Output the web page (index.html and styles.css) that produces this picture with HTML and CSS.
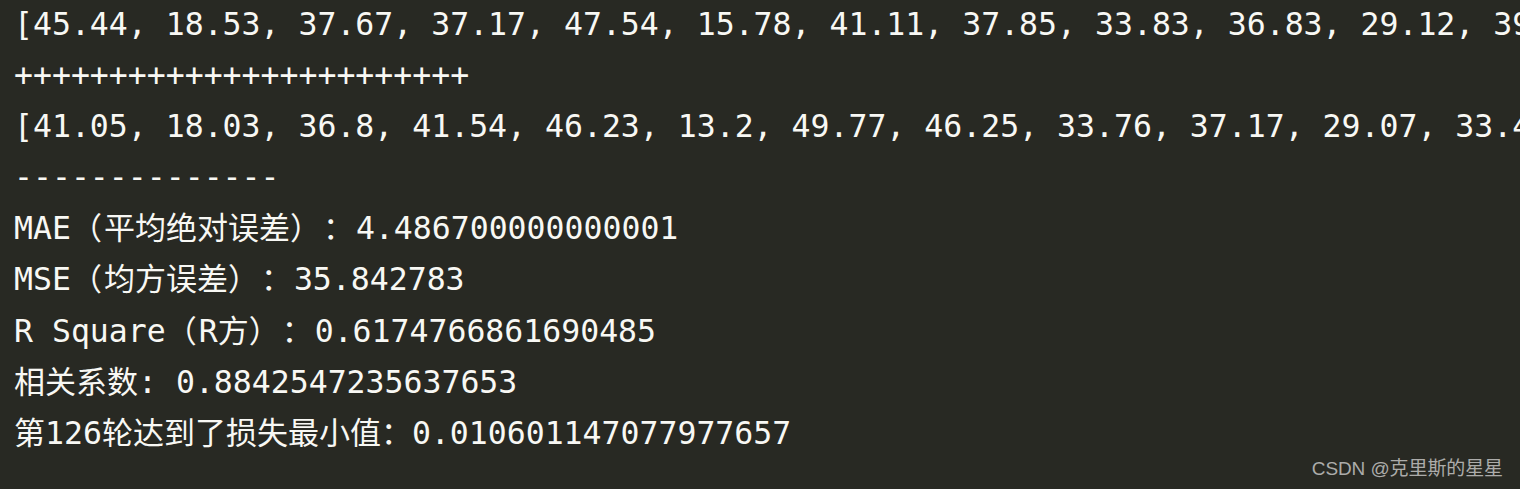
FILE: index.html
```html
<!DOCTYPE html>
<html lang="zh-CN">
<head>
<meta charset="utf-8">
<title>Console output</title>
<link rel="stylesheet" href="styles.css">
</head>
<body>
<div class="console">
<div class="line">[45.44, 18.53, 37.67, 37.17, 47.54, 15.78, 41.11, 37.85, 33.83, 36.83, 29.12, 39</div>
<div class="line">++++++++++++++++++++++++</div>
<div class="line">[41.05, 18.03, 36.8, 41.54, 46.23, 13.2, 49.77, 46.25, 33.76, 37.17, 29.07, 33.4</div>
<div class="line">--------------</div>
<div class="line">MAE<span class="cjk"><span class="punct">（</span>平均绝对误差<span class="punct">）：</span></span>4.486700000000001</div>
<div class="line">MSE<span class="cjk"><span class="punct">（</span>均方误差<span class="punct">）：</span></span>35.842783</div>
<div class="line">R Square<span class="cjk punct">（</span>R<span class="cjk">方<span class="punct">）：</span></span>0.6174766861690485</div>
<div class="line"><span class="cjk">相关系数</span>: 0.8842547235637653</div>
<div class="line"><span class="cjk">第</span>126<span class="cjk">轮达到了损失最小值：</span>0.010601147077977657</div>
</div>
<div class="watermark">CSDN @克里斯的星星</div>
</body>
</html>
```
FILE: styles.css
```css
html, body {
  margin: 0;
  padding: 0;
  width: 1520px;
  height: 489px;
  overflow: hidden;
  background: #282923;
}
body {
  position: relative;
}
.console {
  margin-top: -1px;
  padding-left: 14px;
  font-family: "DejaVu Sans Mono", "Noto Sans CJK SC", monospace;
  font-size: 31.5px;
  line-height: 51.1px;
  color: #f8f8f4;
  text-spacing-trim: space-all;
}
.line {
  height: 51.1px;
  white-space: pre;
  overflow: hidden;
}
.cjk {
  font-family: "Noto Sans CJK SC", sans-serif;
  font-size: 31px;
  line-height: 0;
  text-spacing-trim: space-all;
}
.punct {
  letter-spacing: 2px;
}
.watermark {
  position: absolute;
  right: 17px;
  bottom: 9px;
  font-family: "Liberation Sans", "Noto Sans CJK SC", sans-serif;
  font-size: 19px;
  color: #acacaa;
  letter-spacing: -0.1px;
}
```
